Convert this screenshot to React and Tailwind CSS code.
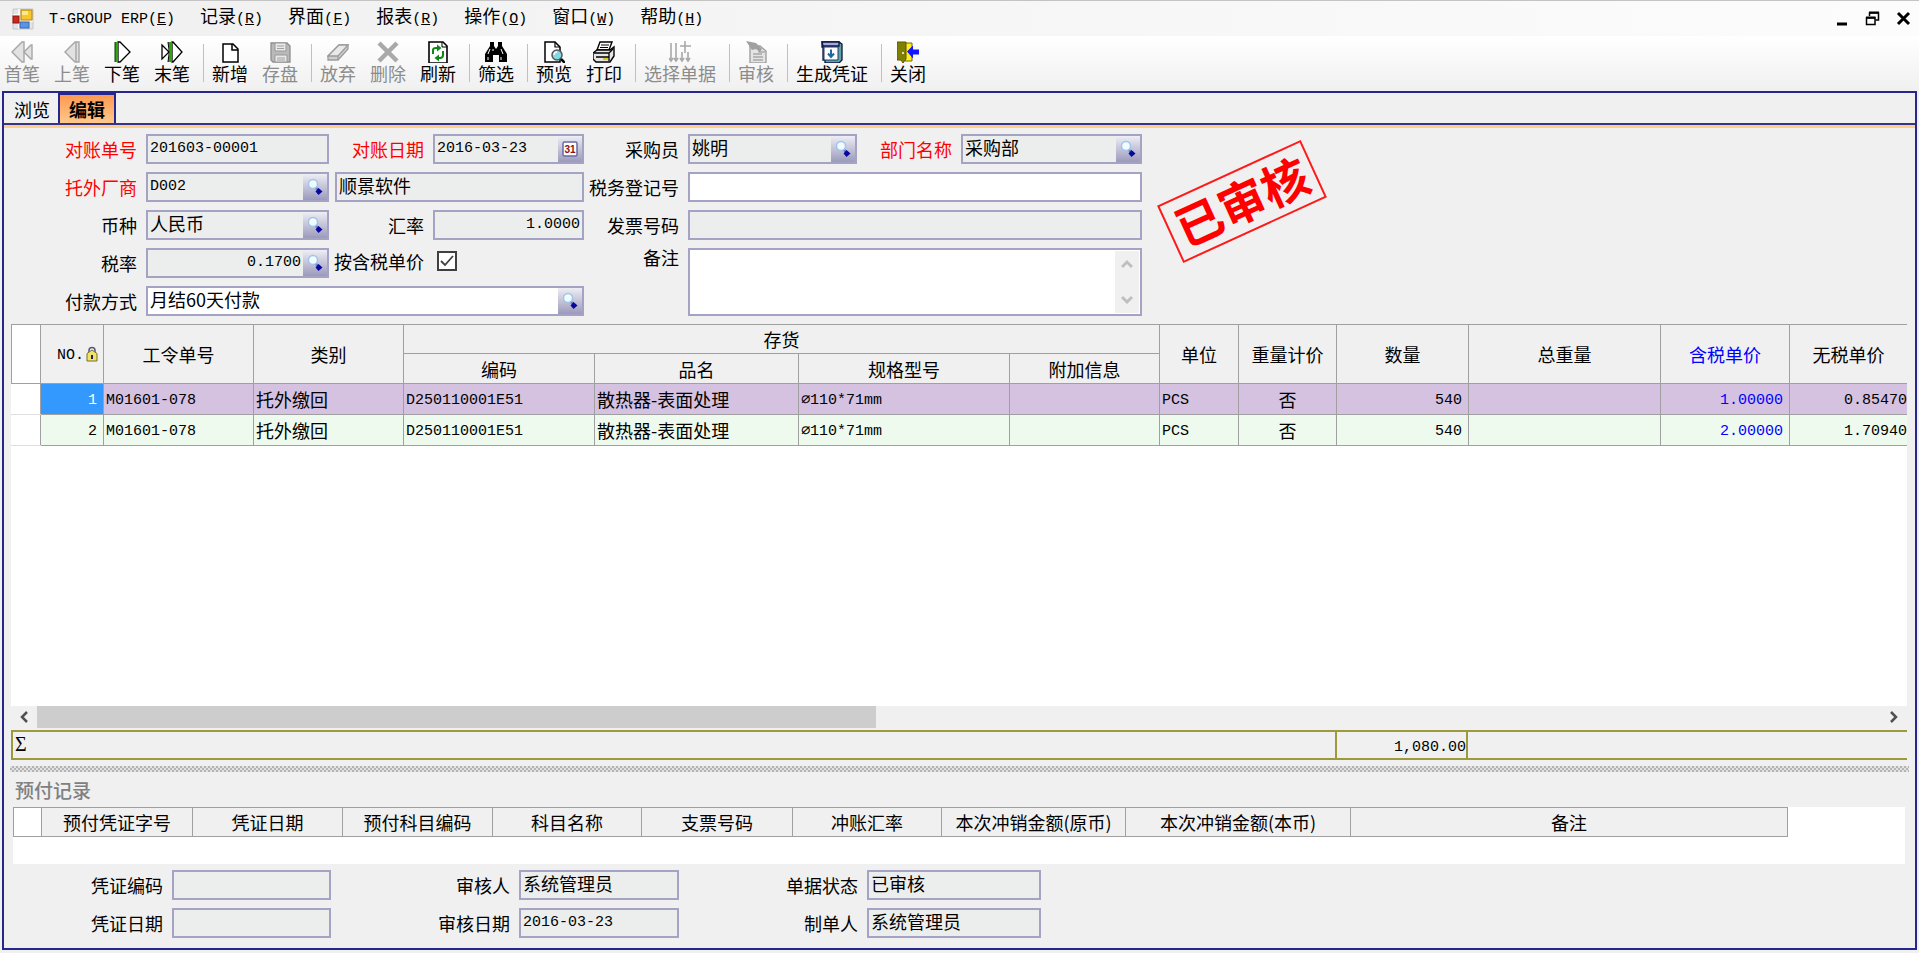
import { useState } from "react";
import { clsx } from "clsx";

const MENUS = [
  ["记录", "R"],
  ["界面", "F"],
  ["报表", "R"],
  ["操作", "O"],
  ["窗口", "W"],
  ["帮助", "H"],
];

const TOOLS = [
  [["首笔", "first", true], ["上笔", "prev", true], ["下笔", "next"], ["末笔", "last"]],
  [["新增", "add"], ["存盘", "save", true]],
  [["放弃", "eraser", true], ["删除", "remove", true], ["刷新", "refresh"]],
  [["筛选", "filter"]],
  [["预览", "preview"], ["打印", "print"]],
  [["选择单据", "pick", true]],
  [["审核", "audit", true]],
  [["生成凭证", "voucher"]],
  [["关闭", "exit"]],
];

const ICONS = {
  first: (
    <g fill="#e2e2e2" stroke="#a6a6a6" strokeWidth="1.4">
      <path d="M1 11 11 1h2v20h-2z" />
      <path d="M13 11l7-7h1v14h-1z" />
    </g>
  ),
  prev: <path d="M4 11 14 1h4v20h-4zM15 1v20" fill="#e2e2e2" stroke="#a6a6a6" strokeWidth="1.4" />,
  next: (
    <>
      <path d="M7 1h2l10 10L9 21H7z" fill="#fff" stroke="#000" strokeWidth="1.3" />
      <path d="M4 1h3v20H4z" fill="#2fa512" />
      <path d="M4 1v20" stroke="#0b3a06" />
    </>
  ),
  last: (
    <>
      <path d="M1 4l7 7-7 7z" fill="#fff" stroke="#000" strokeWidth="1.3" />
      <path d="M11 1h1l9 10-9 10h-1z" fill="#fff" stroke="#000" strokeWidth="1.3" />
      <path d="M7 1h4v20H7l2-10z" fill="#2fa512" />
      <path d="M7 1l1 8v4l-1 8" fill="none" stroke="#000" />
    </>
  ),
  add: (
    <>
      <path d="M4 3h10l5 5v13H4z" fill="#fff" stroke="#000" strokeWidth="1.5" />
      <path d="M13 3v6h6" fill="none" stroke="#000" strokeWidth="1.5" />
    </>
  ),
  save: (
    <>
      <path d="M2 2h16l3 3v16H4l-2-2z" fill="#b9b9b9" stroke="#8e8e8e" strokeWidth="1.3" />
      <path d="M6 2h11v8H6zM6 14h12v7H6z" fill="#e9e9e9" stroke="#999" />
      <path d="M8 5h7M8 7.500h7M8 17h8M8 19h8" stroke="#a0a0a0" />
    </>
  ),
  eraser: (
    <>
      <path d="M1 15 12 4h9v4L11 19H1z" fill="#cfcfcf" stroke="#9c9c9c" strokeWidth="1.3" />
      <path d="M1 15 12 4h9L11 15z" fill="#e9e9e9" stroke="#9c9c9c" strokeWidth="1.3" />
      <path d="M11 15v4" stroke="#9c9c9c" strokeWidth="1.3" />
    </>
  ),
  remove: <path d="M2 2l18 18M20 2 2 20" stroke="#a9a9a9" strokeWidth="4.500" fill="none" />,
  refresh: (
    <>
      <path d="M2 1h14l4 4v17H2z" fill="#fff" stroke="#000" strokeWidth="1.6" />
      <path d="M15 1v5h5" fill="none" stroke="#000" />
      <path d="M6 13V9q0-2 3-2h2M16 10v4q0 3-3 3h-2" fill="none" stroke="#0a8a12" strokeWidth="2" />
      <path d="M10 3.500 14.500 7 10 10.500zM12 13.500 7.500 17 12 20.500z" fill="#0a8a12" />
    </>
  ),
  filter: (
    <>
      <path d="M5 1h4v4l2 3 2-3V1h4v4l5 8v8h-8v-7h-6v7H0v-8l5-8z" fill="#000" />
      <path d="M5 8l-2 5M8 8v2M16 8l2 5M3 16v3M16 16v3" stroke="#fff" strokeWidth="1" />
    </>
  ),
  preview: (
    <>
      <path d="M2 1h10l5 5v15H2z" fill="#fff" stroke="#000" strokeWidth="1.5" />
      <path d="M12 1v5h5" fill="none" stroke="#000" strokeWidth="1.200" />
      <circle cx="14" cy="14" r="5" fill="#7fdbe6" stroke="#555" strokeWidth="1.5" />
      <path d="M11 14q0-3 3-3" fill="none" stroke="#fff" strokeWidth="1.3" />
      <path d="M18 18l4 4" stroke="#000" strokeWidth="2.500" />
    </>
  ),
  print: (
    <>
      <path d="M7 1h12l-3 8H4z" fill="#fff" stroke="#000" strokeWidth="1.4" />
      <path d="M8 4h8M7 6.500h8" stroke="#000" />
      <path d="M0 12l4-3h13l4-3v9l-4 6H3l-3-3z" fill="#e6e6e6" stroke="#000" strokeWidth="1.4" />
      <path d="M1 12h15l4-4M3 16h13M16 12v8" fill="none" stroke="#000" strokeWidth="1.3" />
      <path d="M10 18h5" stroke="#d9cf00" strokeWidth="2" />
    </>
  ),
  pick: (
    <g fill="none" stroke="#a8a8a8" strokeWidth="1.6">
      <path d="M2 2v18M7 2v18M13 11v9M19 11v9M16 0v12M11 5h11" />
      <path d="M0 17l2 3 2-3M5 17l2 3 2-3M11 17l2 3 2-3M17 17l2 3 2-3" />
    </g>
  ),
  audit: (
    <>
      <path d="M5 5h10l6 5v12H5z" fill="#e4e4e4" stroke="#a0a0a0" strokeWidth="1.4" />
      <path d="M8 13h9M8 16h10M8 19h10M14 5v6h6" fill="none" stroke="#a8a8a8" strokeWidth="1.3" />
      <path d="M1 0l10 2 6 6-2 3-4-3-4 1z" fill="#a0a0a0" />
    </>
  ),
  voucher: (
    <>
      <path d="M1 1h17l3 2v16l-3 3H4v-3H2V6H1z" fill="#5fa3a5" stroke="#0b1440" strokeWidth="1.3" />
      <path d="M1 1h17v4H2z" fill="#a9a7dd" stroke="#0b1440" strokeWidth="1.3" />
      <path d="M3 6h14v13H3z" fill="#fff" stroke="#24386b" />
      <path d="M10 8.500v7M7 12.500l3 3.500 3-3.500" fill="none" stroke="#2069a0" strokeWidth="2" />
    </>
  ),
  exit: (
    <>
      <path d="M8 2h7v18H8z" fill="#ffee20" stroke="#6e6e00" />
      <path d="M0 1h9v17l-3 4-2-3H0z" fill="#808000" stroke="#5a5a00" />
      <circle cx="6" cy="12" r="1" fill="#fff" />
      <path d="M10 10.500 16 4.500v4h6v5h-6v4z" fill="#1414ff" />
    </>
  ),
};

const DETAIL_COLS = [29, 63, 150, 150, 191, 204, 211, 150, 79, 98, 132, 192, 129];
const ROWS = [
  { no: 1, price: "1.00000", net: "0.85470" },
  { no: 2, price: "2.00000", net: "1.70940" },
];

const PREPAY_COLS = [
  ["", 28],
  ["预付凭证字号", 151],
  ["凭证日期", 150],
  ["预付科目编码", 150],
  ["科目名称", 149],
  ["支票号码", 151],
  ["冲账汇率", 149],
  ["本次冲销金额(原币)", 184],
  ["本次冲销金额(本币)", 225],
  ["备注", 437],
];

const MONO = "font-['Liberation_Mono','Noto_Sans_CJK_SC',monospace] text-[15px]";
const MONO_CELL = "font-['Liberation_Mono','Noto_Sans_CJK_SC',monospace] text-[15px] pt-1";

function LookupIcon() {
  return (
    <svg width="16" height="18" viewBox="0 0 16 18">
      <path d="M8 9l4 4" stroke="#6d86b5" strokeWidth="2.500" />
      <circle cx="6" cy="6" r="4.500" fill="#f2fbff" stroke="#9cc6ea" strokeWidth="1.500" />
      <path d="M11.500 10 15.500 13.500 11.500 17 8.500 13.500z" fill="#0808a0" />
    </svg>
  );
}

function CalendarIcon() {
  return (
    <svg width="16" height="16" viewBox="0 0 16 16">
      <rect x="1" y="1" width="14" height="14" rx="1.500" fill="#fff" stroke="#6a6aa8" strokeWidth="1.500" />
      <text x="8" y="12" textAnchor="middle" fontSize="10" fontWeight="bold" fill="#8b1010" fontFamily="Liberation Sans, sans-serif">31</text>
    </svg>
  );
}

function Label({ htmlFor, red, children, className = "w-[104px]" }) {
  return (
    <label htmlFor={htmlFor} className={clsx("shrink-0 pr-[9px] text-right whitespace-nowrap", red && "text-[#ff0000]", className)}>
      {children}
    </label>
  );
}

function Field({ id, value = "", width, right, mono, white, picker, label }) {
  return (
    <div className={clsx("flex h-[30px] shrink-0 border-2 border-[#a5a3c3]", width, white ? "bg-white" : "bg-[#eceeed]")}>
      <input
        id={id}
        aria-label={label}
        defaultValue={value}
        readOnly={!white}
        className={clsx("min-w-0 flex-1 px-[2px] outline-none", mono ? MONO : "pb-1", right && "text-right")}
      />
      {picker && (
        <button
          type="button"
          aria-label={picker === "date" ? "选择日期" : "查找"}
          className="flex w-6 shrink-0 items-center justify-center bg-linear-to-b from-[#eeeef5] to-[#9c9abb]"
        >
          {picker === "date" ? <CalendarIcon /> : <LookupIcon />}
        </button>
      )}
    </div>
  );
}

function MenuBar() {
  return (
    <div className="flex h-9 items-center border-t border-[#c4c4c4] bg-linear-to-r from-[#f0f0f0] to-[#fcfcfc] pr-2 pl-3">
      <svg width="22" height="22" viewBox="0 0 22 22">
        <path d="M1 1h20v20H1z" fill="#e4e4e4" stroke="#c6c6c6" />
        <path d="M1 7h7M7 1v20M8 13h13" stroke="#fff" strokeWidth="1.500" />
        <rect x="9" y="2" width="11" height="10" fill="#f7c52c" stroke="#b8860b" />
        <rect x="10" y="3" width="6" height="4" fill="#ffe88a" />
        <rect x="1" y="8" width="6" height="7" fill="#c82a1c" stroke="#8c1610" />
        <rect x="8" y="14" width="9" height="6" fill="#5b93e6" stroke="#3566b4" />
      </svg>
      <nav className="ml-[15px] flex items-baseline gap-[25px] pb-[2px]">
        <button type="button" className={MONO}>
          T-GROUP ERP(<u>E</u>)
        </button>
        {MENUS.map(([name, key]) => (
          <button key={name} type="button" className="flex items-baseline">
            {name}
            <span className={MONO}>
              (<u>{key}</u>)
            </span>
          </button>
        ))}
      </nav>
      <div className="ml-auto flex items-center gap-4">
        <button type="button" aria-label="最小化">
          <svg width="14" height="14" viewBox="0 0 14 14">
            <path d="M2 12h10" stroke="#000" strokeWidth="3" />
          </svg>
        </button>
        <button type="button" aria-label="还原">
          <svg width="15" height="15" viewBox="0 0 15 15" fill="none" stroke="#000">
            <path d="M4.500 5V2h9v7h-3M4 2h10" strokeWidth="1.500" />
            <path d="M1.500 7h8.500v6.500H1.500z" strokeWidth="1.500" />
            <path d="M1 6.500h9.500M4 1.500h10" strokeWidth="2" />
          </svg>
        </button>
        <button type="button" aria-label="关闭窗口">
          <svg width="15" height="15" viewBox="0 0 15 15">
            <path d="M2 2l11 11M13 2 2 13" stroke="#000" strokeWidth="3" />
          </svg>
        </button>
      </div>
    </div>
  );
}

function ToolBar() {
  return (
    <div className="flex h-[55px] items-start bg-linear-to-b from-white to-[#f0f0f0] pt-[5px]">
      {TOOLS.map((group, i) => (
        <div key={i} className="flex">
          {i > 0 && <span className="mt-[3px] mr-1 ml-[3px] h-[38px] w-px bg-[#c0c0c0]" />}
          {group.map(([name, icon, off]) => (
            <button
              key={name}
              type="button"
              disabled={off}
              className={clsx("flex flex-col items-center pr-[10px] pl-1", off && "text-[#8c8c8c]")}
            >
              <svg width="22" height="22" viewBox="0 0 22 22">{ICONS[icon]}</svg>
              <span className="leading-5 whitespace-nowrap">{name}</span>
            </button>
          ))}
        </div>
      ))}
    </div>
  );
}

function HeaderForm() {
  const [withTax, setWithTax] = useState(true);
  return (
    <form className="flex items-start pt-[6px] pb-2" onSubmit={(e) => e.preventDefault()}>
      <div className="flex flex-col gap-2">
        <div className="flex items-center">
          <Label htmlFor="billNo" red className="w-[142px]">对账单号</Label>
          <Field id="billNo" value="201603-00001" width="w-[183px]" mono />
          <Label htmlFor="billDate" red>对账日期</Label>
          <Field id="billDate" value="2016-03-23" width="w-[151px]" mono picker="date" />
        </div>
        <div className="flex items-center">
          <Label htmlFor="vendor" red className="w-[142px]">托外厂商</Label>
          <Field id="vendor" value="D002" width="w-[183px]" mono picker="lookup" />
          <div className="ml-[6px]">
            <Field label="厂商名称" value="顺景软件" width="w-[249px]" />
          </div>
        </div>
        <div className="flex items-center">
          <Label htmlFor="currency" className="w-[142px]">币种</Label>
          <Field id="currency" value="人民币" width="w-[183px]" picker="lookup" />
          <Label htmlFor="rate">汇率</Label>
          <Field id="rate" value="1.0000" width="w-[151px]" mono right />
        </div>
        <div className="flex items-center">
          <Label htmlFor="tax" className="w-[142px]">税率</Label>
          <Field id="tax" value="0.1700" width="w-[183px]" mono right picker="lookup" />
          <div className="flex items-center pb-1">
            <Label htmlFor="withTax">按含税单价</Label>
            <span className="relative ml-1 flex">
              <input
                id="withTax"
                type="checkbox"
                checked={withTax}
                onChange={(e) => setWithTax(e.target.checked)}
                className="size-5 appearance-none border-2 border-[#404040] bg-white"
              />
              {withTax && (
                <svg className="pointer-events-none absolute inset-0" width="20" height="20" viewBox="0 0 20 20">
                  <path d="M4 10l4 4 8-9" fill="none" stroke="#404040" strokeWidth="1.800" />
                </svg>
              )}
            </span>
          </div>
        </div>
        <div className="flex items-center">
          <Label htmlFor="payment" className="w-[142px]">付款方式</Label>
          <Field id="payment" value="月结60天付款" width="w-[438px]" white picker="lookup" />
        </div>
      </div>

      <div className="flex flex-col gap-2">
        <div className="flex items-center">
          <Label htmlFor="buyer">采购员</Label>
          <Field id="buyer" value="姚明" width="w-[169px]" picker="lookup" />
          <Label htmlFor="dept" red>部门名称</Label>
          <Field id="dept" value="采购部" width="w-[181px]" picker="lookup" />
        </div>
        <div className="flex items-center">
          <Label htmlFor="taxNo">税务登记号</Label>
          <Field id="taxNo" width="w-[454px]" white mono />
        </div>
        <div className="flex items-center">
          <Label htmlFor="invoice">发票号码</Label>
          <Field id="invoice" width="w-[454px]" mono />
        </div>
        <div className="flex items-start">
          <Label htmlFor="remark" className="w-[104px] leading-[18px]">备注</Label>
          <div className="flex h-[68px] w-[454px] border-2 border-[#a5a3c3] bg-white p-px">
            <textarea id="remark" className="min-w-0 flex-1 resize-none px-[2px] outline-none" />
            <div className="flex w-6 flex-col items-center justify-between bg-[#f0f0f0] py-2">
              <svg width="12" height="10" viewBox="0 0 12 10"><path d="M1 8l5-5 5 5" fill="none" stroke="#bfbfbf" strokeWidth="3" /></svg>
              <svg width="12" height="10" viewBox="0 0 12 10"><path d="M1 2l5 5 5-5" fill="none" stroke="#bfbfbf" strokeWidth="3" /></svg>
            </div>
          </div>
        </div>
      </div>

      <div className="mt-9 ml-[21px] flex h-[63px] w-[158px] shrink-0 rotate-[-24.6deg] items-center justify-center border-2 border-[#ff1a1a] pb-1 text-[47px] font-bold text-[#ff0000]">
        已审核
      </div>
    </form>
  );
}

function Th({ children, className, ...rest }) {
  return (
    <th className={clsx("border border-[#a0a0a0] font-normal", className)} {...rest}>
      {children}
    </th>
  );
}

function DetailGrid() {
  return (
    <div className="mr-2 ml-[7px] flex flex-1 flex-col">
      <div className="flex-1 overflow-hidden bg-white">
        <table className="w-full table-fixed border-collapse">
          <colgroup>
            {DETAIL_COLS.map((w, i) => (
              <col key={i} style={{ width: w }} />
            ))}
            <col />
          </colgroup>
          <thead className="bg-[#f0f0f0]">
            <tr className="h-[29px]">
              <Th rowSpan={2} className="bg-white" />
              <Th rowSpan={2}>
                <span className="flex items-center justify-end pr-[5px]">
                  <span className={MONO_CELL}>NO.</span>
                  <svg className="ml-[2px]" width="12" height="16" viewBox="0 0 12 16">
                    <path d="M3 8V4.500a3 3 0 0 1 6 0V8" fill="none" stroke="#55558a" strokeWidth="1.500" />
                    <path d="M1 7.500 6 4l5 3.500V15H1z" fill="#efe36a" stroke="#77701c" />
                    <path d="M5 9h2v4H5z" fill="#22225a" />
                  </svg>
                </span>
              </Th>
              <Th rowSpan={2}>工令单号</Th>
              <Th rowSpan={2}>类别</Th>
              <Th colSpan={4}>存货</Th>
              <Th rowSpan={2}>单位</Th>
              <Th rowSpan={2}>重量计价</Th>
              <Th rowSpan={2}>数量</Th>
              <Th rowSpan={2}>总重量</Th>
              <Th rowSpan={2} className="text-[#0000ff]">含税单价</Th>
              <Th rowSpan={2} className="border-r-0">无税单价</Th>
            </tr>
            <tr className="h-[30px]">
              <Th>编码</Th>
              <Th>品名</Th>
              <Th>规格型号</Th>
              <Th>附加信息</Th>
            </tr>
          </thead>
          <tbody>
            {ROWS.map((r) => (
              <tr
                key={r.no}
                className={clsx(
                  "h-[31px] *:border *:border-[#a0a0a0] *:px-[2px] *:whitespace-nowrap",
                  r.no === 1 ? "bg-[#d5c1e0]" : "bg-[#eefaee]"
                )}
              >
                <td className="border-b-[#e0e0e0]! border-l-transparent! bg-white" />
                <td className={clsx(MONO_CELL, "pr-[6px]! text-right", r.no === 1 && "bg-[#3399ff] text-white")}>{r.no}</td>
                <td className={MONO_CELL}>M01601-078</td>
                <td>托外缴回</td>
                <td className={MONO_CELL}>D250110001E51</td>
                <td>散热器-表面处理</td>
                <td className={MONO_CELL}>⌀110*71mm</td>
                <td />
                <td className={MONO_CELL}>PCS</td>
                <td className="text-center">否</td>
                <td className={clsx(MONO_CELL, "pr-[6px]! text-right")}>540</td>
                <td />
                <td className={clsx(MONO_CELL, "pr-[6px]! text-right text-[#0000ff]")}>{r.price}</td>
                <td className={clsx(MONO_CELL, "border-r-0! pr-0! text-right")}>{r.net}</td>
              </tr>
            ))}
          </tbody>
        </table>
      </div>

      <div className="flex h-6 items-start bg-[#f0f0f0]">
        <button type="button" aria-label="向左滚动" className="flex h-[22px] w-[26px] items-center justify-center">
          <svg width="10" height="12" viewBox="0 0 10 12"><path d="M8 1 3 6l5 5" fill="none" stroke="#505050" strokeWidth="2.500" /></svg>
        </button>
        <div className="h-[22px] flex-1">
          <div className="h-full w-[45.500%] bg-[#cdcdcd]" />
        </div>
        <button type="button" aria-label="向右滚动" className="flex h-[22px] w-[26px] items-center justify-center">
          <svg width="10" height="12" viewBox="0 0 10 12"><path d="M2 1l5 5-5 5" fill="none" stroke="#505050" strokeWidth="2.500" /></svg>
        </button>
      </div>

      <div className="flex h-[30px] border-2 border-r-0 border-[#9c9a3c]">
        <div className="w-[1322px] px-[2px] font-['Liberation_Serif',serif] text-xl leading-6">Σ</div>
        <div className={clsx(MONO_CELL, "w-[133px] border-x-2 border-[#9c9a3c] text-right")}>1,080.00</div>
      </div>
    </div>
  );
}

function Prepayments() {
  return (
    <section className="pr-[10px] pl-[9px]">
      <h2 className="py-[7px] pl-[2px] text-[19px] leading-[21px] font-medium text-[#808080]">预付记录</h2>
      <div className="h-[57px] bg-white">
        <table className="table-fixed border-collapse bg-[#f0f0f0]">
          <colgroup>
            {PREPAY_COLS.map(([name, w]) => (
              <col key={name} style={{ width: w }} />
            ))}
          </colgroup>
          <thead>
            <tr className="h-[29px]">
              {PREPAY_COLS.map(([name]) => (
                <Th key={name} className={clsx("whitespace-nowrap", !name && "bg-white")}>{name}</Th>
              ))}
            </tr>
          </thead>
        </table>
      </div>
    </section>
  );
}

function FooterForm() {
  return (
    <div className="flex flex-col gap-2 pt-[6px] pb-[10px]">
      <div className="flex items-center">
        <Label htmlFor="voucherNo" className="w-[168px]">凭证编码</Label>
        <Field id="voucherNo" width="w-[159px]" />
        <Label htmlFor="auditor" className="w-[188px]">审核人</Label>
        <Field id="auditor" value="系统管理员" width="w-[160px]" />
        <Label htmlFor="status" className="w-[188px]">单据状态</Label>
        <Field id="status" value="已审核" width="w-[174px]" />
      </div>
      <div className="flex items-center">
        <Label htmlFor="voucherDate" className="w-[168px]">凭证日期</Label>
        <Field id="voucherDate" width="w-[159px]" />
        <Label htmlFor="auditDate" className="w-[188px]">审核日期</Label>
        <Field id="auditDate" value="2016-03-23" width="w-[160px]" mono />
        <Label htmlFor="maker" className="w-[188px]">制单人</Label>
        <Field id="maker" value="系统管理员" width="w-[174px]" />
      </div>
    </div>
  );
}

export default function App() {
  return (
    <div className="flex min-h-screen flex-col bg-[#f0f0f0] font-['Noto_Sans_CJK_SC',sans-serif] text-lg leading-6 text-black">
      <MenuBar />
      <ToolBar />
      <main className="mx-[2px] mb-[3px] flex flex-1 flex-col border-2 border-[#26268f]">
        <div className="flex h-8 items-end border-b-2 border-[#35358a]">
          <button type="button" className="h-7 pr-2 pl-[10px]">浏览</button>
          <button
            type="button"
            className="h-[30px] border-2 border-b-0 border-[#26268f] bg-linear-to-b from-[#ff9850] to-[#ffc88a] px-[9px] font-bold"
          >
            编辑
          </button>
        </div>
        <div className="h-[3px] bg-[#ffcf8a]" />
        <HeaderForm />
        <DetailGrid />
        <div className="mx-[6px] mt-[6px] h-[6px] bg-[#e0e0e0] bg-[conic-gradient(#b4b4b4_25%,#e2e2e2_0_50%,#b4b4b4_0_75%,#e2e2e2_0)] bg-size-[4px_4px]" />
        <Prepayments />
        <FooterForm />
      </main>
    </div>
  );
}
